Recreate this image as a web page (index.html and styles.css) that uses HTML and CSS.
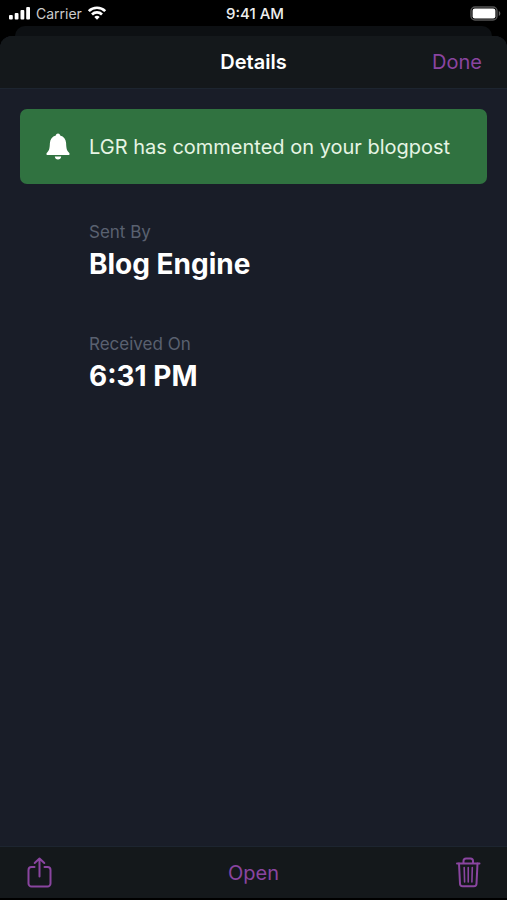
FILE: index.html
```
<!DOCTYPE html>
<html lang="en">
<head>
    <meta charset="UTF-8">
    <meta name="viewport" content="width=device-width, initial-scale=1.0">
    <title>Details</title>
    <link rel="stylesheet" href="styles.css">
</head>
<body>
    <div class="status-bar">
        <div class="status-left">
            <svg class="signal-icon" width="22" height="14" viewBox="0 0 22 14" fill="#fff">
                <rect x="0" y="9" width="3.800" height="4.500" rx="1"/>
                <rect x="5.700" y="7" width="3.800" height="6.500" rx="1"/>
                <rect x="11.500" y="4" width="3.800" height="9.500" rx="1"/>
                <rect x="17.200" y="1" width="3.800" height="12.500" rx="1"/>
            </svg>
            <span class="carrier">Carrier</span>
            <svg class="wifi-icon" width="20" height="14" viewBox="0 0 20 14" fill="none" stroke="#fff" stroke-width="2.700">
                <path d="M1.800 5.100a11.700 11.700 0 0 1 16.400 0"/>
                <path d="M5 8.500a7.100 7.100 0 0 1 10 0"/>
                <path d="M10 13.700l-2.700-2.700a3.900 3.900 0 0 1 5.400 0z" fill="#fff" stroke="none"/>
            </svg>
        </div>
        <span class="clock">9:41 AM</span>
        <div class="status-right">
            <svg width="31" height="15" viewBox="0 0 31 15">
                <rect x="1" y="1" width="26" height="13" rx="4" fill="none" stroke="#555" stroke-width="1.4"/>
                <rect x="2.600" y="2.600" width="22.800" height="9.800" rx="2.200" fill="#fff"/>
                <path d="M28.800 5v5c2-.9 2-4.100 0-5z" fill="#666"/>
            </svg>
        </div>
    </div>

    <div class="back-card"></div>

    <div class="sheet">
        <header class="nav-bar">
            <h1>Details</h1>
            <button type="button" class="text-button done-button">Done</button>
        </header>

        <main class="content">
            <div class="banner">
                <svg class="bell-icon" width="24" height="28" viewBox="0 0 24 28" fill="#fff">
                    <path d="M12 .5c1.200 0 2 .8 2.200 2 3.600.9 5.700 3.800 5.900 7.600.2 5 .6 7.200 2.300 9 .8.8 1.200 1.300 1.200 2 0 .6-.5 1-1.300 1H1.700c-.8 0-1.300-.4-1.300-1 0-.7.4-1.200 1.200-2 1.700-1.800 2.100-4 2.300-9 .2-3.800 2.300-6.700 5.900-7.600.2-1.200 1-2 2.200-2z"/>
                    <path d="M8.800 23.500h6.400c-.2 1.800-1.400 3-3.200 3s-3-1.200-3.200-3z"/>
                </svg>
                <p>LGR has commented on your blogpost</p>
            </div>

            <dl class="info-list">
                <div class="info-item">
                    <dt>Sent By</dt>
                    <dd>Blog Engine</dd>
                </div>
                <div class="info-item">
                    <dt>Received On</dt>
                    <dd>6:31 PM</dd>
                </div>
            </dl>
        </main>

        <footer class="toolbar">
            <button type="button" class="icon-button" aria-label="Share">
                <svg width="26" height="32" viewBox="0 0 26 32" fill="none" stroke="currentColor" stroke-width="2" stroke-linecap="round" stroke-linejoin="round">
                    <path d="M8.500 10H5.500a3 3 0 0 0-3 3v13.500a3 3 0 0 0 3 3h16a3 3 0 0 0 3-3V13a3 3 0 0 0-3-3h-3"/>
                    <path d="M13.500 19.500V1.500M8.700 6l4.800-4.500L18.300 6"/>
                </svg>
            </button>
            <button type="button" class="text-button">Open</button>
            <button type="button" class="icon-button" aria-label="Delete">
                <svg width="26" height="32" viewBox="0 0 26 32" fill="none" stroke="currentColor" stroke-width="2" stroke-linecap="round" stroke-linejoin="round">
                    <path d="M2 6.500h22.500M8.500 6.500V4a2.500 2.500 0 0 1 2.500-2.500h4.500a2.500 2.500 0 0 1 2.500 2.500v2.500"/>
                    <path d="M4 6.500l1 20.200a2.600 2.600 0 0 0 2.600 2.500h11.300a2.600 2.600 0 0 0 2.600-2.500l1-20.200"/>
                    <path d="M9.200 10.500l.4 14.500M13.250 10.500V25M17.300 10.500L16.900 25" stroke-width="1.600"/>
                </svg>
            </button>
        </footer>
    </div>
</body>
</html>
```

FILE: styles.css
```
* {
    margin: 0;
    padding: 0;
    box-sizing: border-box;
}
body {
    min-height: 100vh;
    display: flex;
    flex-direction: column;
    padding-bottom: 2px;
    background-color: #000;
    color: #fff;
    font-family: Inter, "Liberation Sans", sans-serif;
}
svg {
    display: block;
}
button {
    background: none;
    border: none;
    color: #8a45a0;
    font-family: inherit;
    cursor: pointer;
}

/* Status bar */
.status-bar {
    display: grid;
    grid-template-columns: 1fr auto 1fr;
    align-items: center;
    height: 26px;
    padding: 0 6px 0 9px;
    font-size: 14px;
}
.status-left {
    display: flex;
    align-items: center;
    gap: 5px;
}
.carrier {
    color: #ccc;
}
.clock {
    font-size: 15px;
    font-weight: 500;
    color: #eee;
}
.status-right {
    justify-self: end;
}

/* Edge of the screen behind the sheet */
.back-card {
    height: 10px;
    margin: 0 15px;
    background-color: #0d1013;
    border-radius: 10px 10px 0 0;
}

.sheet {
    flex: 1;
    display: flex;
    flex-direction: column;
    background-color: #191d28;
    border-radius: 12px 12px 0 0;
    overflow: hidden;
}
.nav-bar {
    display: grid;
    grid-template-columns: 1fr auto 1fr;
    align-items: center;
    height: 53px;
    padding: 0 25px;
    background-color: #14181b;
    border-bottom: 1px solid #1d2530;
}
.nav-bar h1 {
    grid-column: 2;
    font-size: 20px;
    font-weight: 600;
}
.text-button {
    font-size: 20px;
}
.done-button {
    justify-self: end;
}

/* Content */
.content {
    flex: 1;
    padding: 20px;
}
.banner {
    display: flex;
    align-items: center;
    gap: 19px;
    min-height: 75px;
    padding: 12px 26px;
    background-color: #307240;
    border-radius: 7px;
}
.bell-icon {
    flex: none;
}
.banner p {
    font-size: 20px;
    line-height: 24px;
    color: #e6f5e4;
}
.info-list {
    display: grid;
    gap: 48px;
    padding: 36px 26px 0 69px;
}
.info-item dt {
    font-size: 17px;
    line-height: 24px;
    color: #5a6170;
}
.info-item dd {
    font-size: 28px;
    line-height: 40px;
    font-weight: 700;
}

/* Bottom toolbar */
.toolbar {
    display: flex;
    align-items: center;
    justify-content: space-between;
    height: 52px;
    padding: 0 26px;
    background-color: #14181b;
    border-top: 1px solid #1d2530;
}
```
